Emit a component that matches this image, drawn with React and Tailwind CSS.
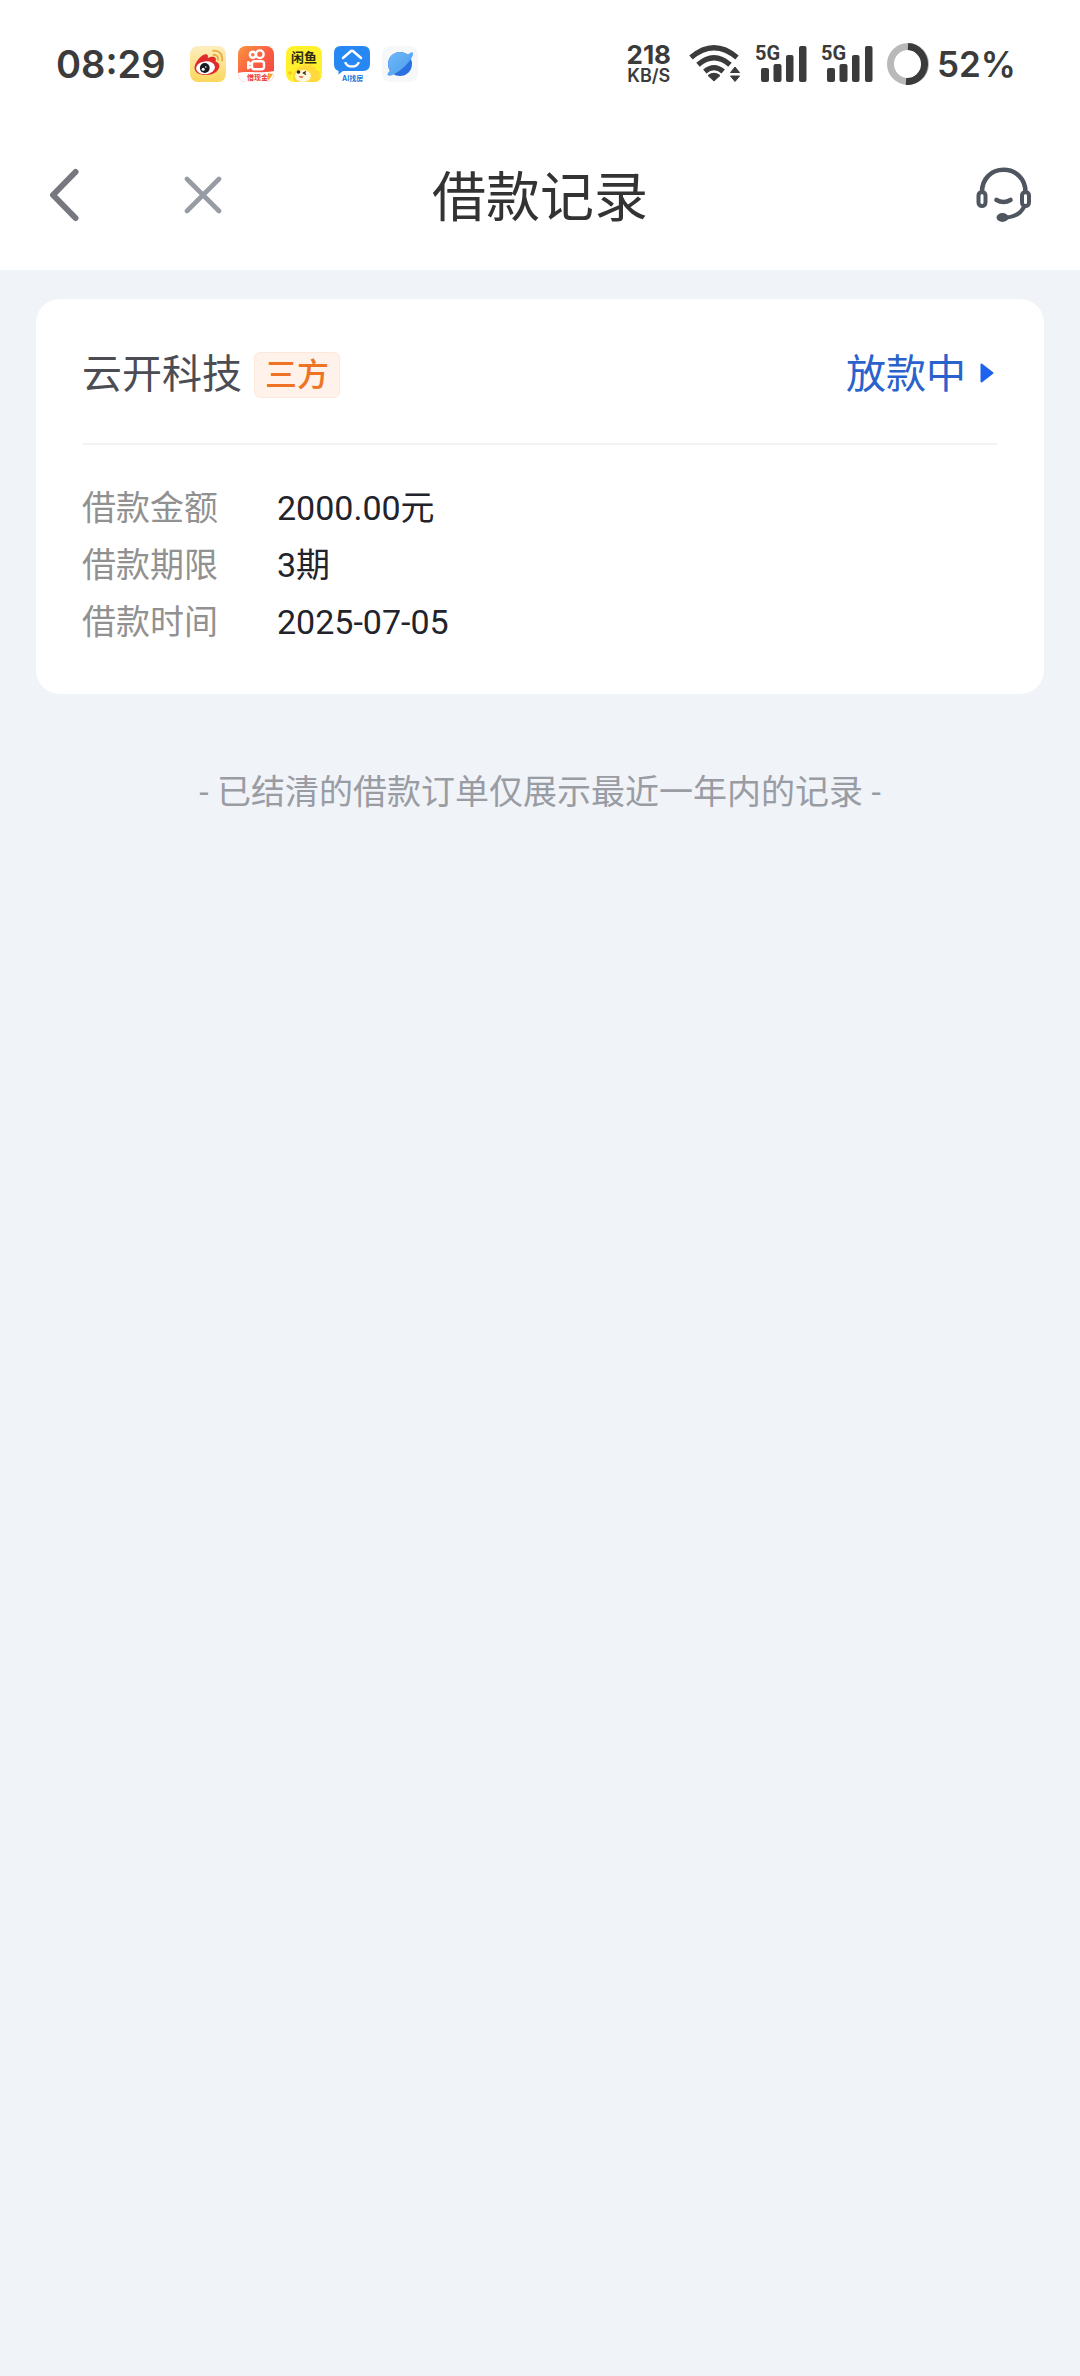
import { useState } from 'react'

const fields = [
  { key: 'amount', label: '借款金额' },
  { key: 'term', label: '借款期限' },
  { key: 'date', label: '借款时间' },
]

const initialRecords = [
  {
    id: 1,
    company: '云开科技',
    tag: '三方',
    status: '放款中',
    amount: '2000.00元',
    term: '3期',
    date: '2025-07-05',
  },
]

function WeiboIcon() {
  return (
    <svg viewBox="0 0 36 36" className="size-9">
      <defs>
        <linearGradient id="weibo" x1="0" y1="0" x2="0" y2="1">
          <stop offset="0" stopColor="#fdeec0" />
          <stop offset="1" stopColor="#fcd75c" />
        </linearGradient>
      </defs>
      <rect width="36" height="36" rx="8" fill="url(#weibo)" />
      <path
        d="M4.500 22C4.500 17 10 10 14.500 8.500C17.500 7.700 18.500 9.500 17.800 12C21 10.500 24.500 10.200 25.500 12C26.200 13.200 25.800 14.500 25.500 15.500C28 16.300 29.500 18 29.300 20.500C28.800 25.500 22.500 29 16 29C9.500 29 4.500 26.500 4.500 22Z"
        fill="#e02b2c"
      />
      <ellipse cx="15.500" cy="21.800" rx="9.500" ry="6.400" fill="#fff" transform="rotate(-6 15.500 21.800)" />
      <circle cx="14.800" cy="22" r="4.900" fill="#191b22" />
      <circle cx="13.200" cy="23.200" r="1.500" fill="#fff" />
      <circle cx="15.800" cy="21" r="0.800" fill="#fff" />
      <path
        d="M23.500 8.800C26.500 8.500 28.500 10.800 28 13.500M23 4.800C29 4 33.200 8.800 32 14.500"
        fill="none"
        stroke="#e9aa3e"
        strokeWidth="1.800"
        strokeLinecap="round"
      />
    </svg>
  )
}

function KuaishouIcon() {
  return (
    <svg viewBox="0 0 36 36" className="size-9">
      <defs>
        <linearGradient id="kuaishou" x1="0" y1="0" x2="1" y2="1">
          <stop offset="0" stopColor="#f9973f" />
          <stop offset="0.500" stopColor="#fb5c43" />
          <stop offset="1" stopColor="#f5433f" />
        </linearGradient>
        <clipPath id="kuaishou-clip">
          <rect width="36" height="36" rx="8" />
        </clipPath>
      </defs>
      <g clipPath="url(#kuaishou-clip)">
        <rect width="36" height="36" fill="url(#kuaishou)" />
        <path d="M0 27C8 24.500 20 28 36 25V36H0Z" fill="#fff" />
        <g fill="none" stroke="#fff" strokeWidth="2.400">
          <circle cx="14.800" cy="8.800" r="3" />
          <circle cx="21.800" cy="8.200" r="3.800" />
          <rect x="14" y="15.200" width="12" height="8" rx="2.500" />
          <path d="M13.500 18L10.200 16.200V22.200L13.500 20.500" strokeLinejoin="round" />
        </g>
        <text x="9" y="34" fontSize="7" fontWeight="700" fill="#ee3b33">
          借现金
        </text>
        <path d="M30 27L35 28L31 34L29 33Z" fill="#f7a33d" />
      </g>
    </svg>
  )
}

function XianyuIcon() {
  return (
    <svg viewBox="0 0 36 36" className="size-9">
      <defs>
        <clipPath id="xianyu-clip">
          <rect width="36" height="36" rx="8" />
        </clipPath>
      </defs>
      <g clipPath="url(#xianyu-clip)">
        <rect width="36" height="36" fill="#fff22d" />
        <path
          d="M8 36C6 30 8 24 12 22L14 20L16 21L19 18L21 20L25 18L27 21L30 21L30 24L34 26L33 30L36 33V36Z"
          fill="#ffd83a"
        />
        <ellipse cx="17" cy="30" rx="8" ry="6" fill="#fff9dc" />
        <circle cx="12.500" cy="26" r="1.800" fill="#2b2410" />
        <path d="M20 25.500L17.500 27L20 28.500" fill="none" stroke="#2b2410" strokeWidth="1.400" />
        <path d="M12.500 30Q15 33.500 18 30.500Z" fill="#e8542d" />
        <circle cx="4" cy="27" r="1.800" fill="#f4c61f" />
        <text x="5" y="15.500" fontSize="13" fontWeight="700" fill="#2c2a12">
          闲鱼
        </text>
      </g>
    </svg>
  )
}

function HouseIcon() {
  return (
    <svg viewBox="0 0 36 36" className="size-9">
      <path
        d="M7 0H29Q36 0 36 7V18Q36 25 29 25H9L4.500 28.500V25Q0 23.500 0 18V7Q0 0 7 0Z"
        fill="#2788f3"
      />
      <path
        d="M9 12L16.500 5.500Q18 4.300 19.500 5.500L27 12M11.500 17C14 21.800 22 21.800 24.500 17"
        fill="none"
        stroke="#fff"
        strokeWidth="2.500"
        strokeLinecap="round"
        strokeLinejoin="round"
      />
      <text x="8" y="34.500" fontSize="7" fontWeight="700" fill="#2277d8">
        AI找房
      </text>
    </svg>
  )
}

function PlanetIcon() {
  return (
    <svg viewBox="0 0 36 36" className="size-9">
      <defs>
        <linearGradient id="planet" x1="0" y1="0" x2="1" y2="1">
          <stop offset="0" stopColor="#6fb9f8" />
          <stop offset="1" stopColor="#4a9bee" />
        </linearGradient>
      </defs>
      <rect width="36" height="36" rx="8" fill="#f5f7f9" />
      <circle cx="18" cy="18" r="12" fill="#2c6fe0" />
      <path
        d="M26 8.500C29.500 5.500 31.500 5.500 31 8.500C29 16 17 27 9 29.500C4.500 30.500 4.500 28 8 24.500C3.500 16 8 6.500 17.500 6C21 6 24 7 26 8.500Z"
        fill="url(#planet)"
      />
    </svg>
  )
}

function WifiIcon() {
  return (
    <svg viewBox="0 0 52 38" className="h-[38px] w-[52px] text-[#3b3b3b]">
      <g fill="none" stroke="currentColor" strokeWidth="5.200">
        <path d="M2 12.500Q25 -7 48 12.500" />
        <path d="M9 19.700Q25 5.700 41 19.700" />
        <path d="M15.800 26.500Q25 18.800 34.200 26.500" />
      </g>
      <path
        d="M19 30.500Q25 26 31 30.500L25 36ZM46 22L50.500 27.500H41.500ZM41.500 31H50.500L46 36.500Z"
        fill="currentColor"
        stroke="currentColor"
        strokeWidth="1"
        strokeLinejoin="round"
      />
    </svg>
  )
}

function Signal() {
  return (
    <div className="relative">
      <svg viewBox="0 0 52 38" className="h-[38px] w-[52px]" fill="#3b3b3b">
        <rect x="6" y="23" width="8" height="14" rx="2" />
        <rect x="18.500" y="19" width="8" height="18" rx="2" />
        <rect x="31" y="10" width="7.500" height="27" rx="2" />
        <rect x="44" y="1" width="7.500" height="36" rx="2" />
      </svg>
      <span className="absolute top-0 left-0 font-['Roboto'] text-xl leading-4 font-bold">
        5G
      </span>
    </div>
  )
}

function StatusBar() {
  return (
    <div className="flex h-32 items-center justify-between pr-16 pl-14 font-['Inter','Noto_Sans_CJK_SC',sans-serif] text-[#3b3b3b]">
      <div className="flex items-center gap-3">
        <span className="mr-3 text-[38px] leading-10 font-semibold">08:29</span>
        <WeiboIcon />
        <KuaishouIcon />
        <XianyuIcon />
        <HouseIcon />
        <PlanetIcon />
      </div>

      <div className="flex items-center gap-[14px]">
        <div className="mr-1 text-center font-semibold">
          <div className="text-[26px] leading-6 font-bold">218</div>
          <div className="text-lg leading-[18px]">KB/S</div>
        </div>
        <WifiIcon />
        <Signal />
        <Signal />
        <div className="flex items-center gap-2">
          <svg viewBox="0 0 42 42" className="size-[42px]" fill="none" strokeWidth="7">
            <circle cx="21" cy="21" r="17.500" stroke="#b9b9b9" />
            <path d="M21 3.500A17.500 17.500 0 0 1 19 38.500" stroke="#3b3b3b" />
          </svg>
          <span className="text-[35px] leading-10 font-semibold">52%</span>
        </div>
      </div>
    </div>
  )
}

function NavBar() {
  return (
    <header className="grid h-[142px] grid-cols-[1fr_auto_1fr] items-center px-12">
      <div className="flex items-center gap-[104px] pb-2">
        <button type="button" aria-label="返回">
          <svg viewBox="0 0 32 54" className="h-[54px] w-8" fill="none">
            <path
              d="M27.500 4L5 27L27.500 50"
              stroke="#77787f"
              strokeWidth="6"
              strokeLinecap="round"
              strokeLinejoin="round"
            />
          </svg>
        </button>
        <button type="button" aria-label="关闭">
          <svg viewBox="0 0 38 38" className="size-[38px]" fill="none">
            <path
              d="M3 3L35 35M35 3L3 35"
              stroke="#979ba3"
              strokeWidth="4.600"
              strokeLinecap="round"
            />
          </svg>
        </button>
      </div>

      <h1 className="text-[54px] leading-[72px] text-[#333333]">借款记录</h1>

      <button type="button" aria-label="客服" className="justify-self-end pb-2">
        <svg
          viewBox="0 0 56 56"
          className="size-14"
          fill="none"
          stroke="#4f565f"
          strokeWidth="4.600"
          strokeLinecap="round"
        >
          <path d="M6 25C6 11.500 15.500 2.800 27.500 2.800S49.500 11.500 49.500 25" />
          <rect x="2.500" y="25" width="7" height="14" rx="3.500" strokeWidth="4" />
          <rect x="46" y="25" width="7" height="14" rx="3.500" strokeWidth="4" />
          <path d="M20.500 33Q27.500 37 34.500 33" />
          <path d="M48 40Q43 49.500 31 50.500" strokeWidth="4" />
          <ellipse cx="26.500" cy="50.500" rx="4.500" ry="3" fill="#4f565f" strokeWidth="3" />
        </svg>
      </button>
    </header>
  )
}

function RecordCard({ record }) {
  return (
    <article className="rounded-3xl bg-white px-[46px] pb-[43px]">
      <div className="flex h-[146px] items-center justify-between border-b-2 border-[#f3f3f5] pt-2">
        <div className="flex items-center gap-3">
          <h2 className="text-[40px] leading-[60px] text-[#4c4d54]">
            {record.company}
          </h2>
          <span className="rounded-md border border-[#fde8dc] bg-[#fff2ea] px-[10px] text-[32px] leading-[44px] font-medium text-[#ee7424]">
            {record.tag}
          </span>
        </div>

        <button
          type="button"
          className="flex items-center gap-[14px] pr-1 text-[40px] leading-[60px] text-[#2a62cc]"
        >
          {record.status}
          <svg viewBox="0 0 14 20" className="mb-1 h-5 w-[14px]">
            <path
              d="M1.500 1.500L12.500 10L1.500 18.500Z"
              fill="#1f62ee"
              stroke="#1f62ee"
              strokeWidth="2"
              strokeLinejoin="round"
            />
          </svg>
        </button>
      </div>

      <dl className="pt-[35px] text-[34px] leading-[57px]">
        {fields.map((field) => (
          <div key={field.key} className="flex">
            <dt className="w-[195px] text-[#919191]">{field.label}</dt>
            <dd className="text-[#22232b]">{record[field.key]}</dd>
          </div>
        ))}
      </dl>
    </article>
  )
}

function App() {
  const [records] = useState(initialRecords)

  return (
    <div className="flex min-h-screen flex-col bg-[#f0f3f8] font-['Roboto','Noto_Sans_CJK_SC',sans-serif]">
      <div className="bg-white">
        <StatusBar />
        <NavBar />
      </div>

      <main className="px-9 pt-[29px]">
        {records.map((record) => (
          <RecordCard key={record.id} record={record} />
        ))}

        <p className="pt-[70px] text-center text-[34px] leading-[57px] text-[#999ca3]">
          - 已结清的借款订单仅展示最近一年内的记录 -
        </p>
      </main>
    </div>
  )
}

export default App
